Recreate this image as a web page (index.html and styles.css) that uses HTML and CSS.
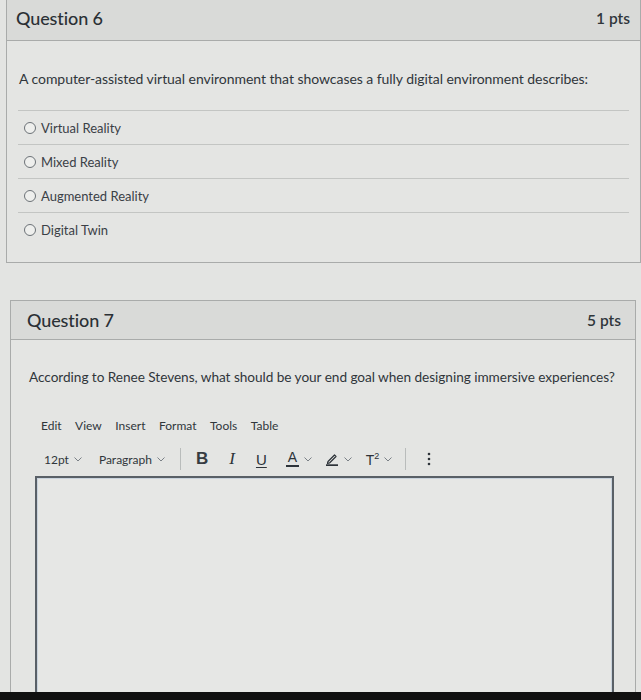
FILE: index.html
```html
<!DOCTYPE html>
<html lang="en">
<head>
<meta charset="utf-8">
<title>Quiz</title>
<link rel="stylesheet" href="styles.css">
</head>
<body>
<div class="page">
  <section class="card card-q6">
    <header class="card-head">
      <h2 class="q-title">Question 6</h2>
      <span class="q-pts">1 pts</span>
    </header>
    <div class="card-body q6-body">
      <p class="q-text">A computer-assisted virtual environment that showcases a fully digital environment describes:</p>
      <ul class="answers">
        <li class="answer"><span class="radio"></span><span class="ans-label">Virtual Reality</span></li>
        <li class="answer"><span class="radio"></span><span class="ans-label">Mixed Reality</span></li>
        <li class="answer"><span class="radio"></span><span class="ans-label">Augmented Reality</span></li>
        <li class="answer"><span class="radio"></span><span class="ans-label">Digital Twin</span></li>
      </ul>
    </div>
  </section>

  <section class="card card-q7">
    <header class="card-head head-q7">
      <h2 class="q-title">Question 7</h2>
      <span class="q-pts">5 pts</span>
    </header>
    <div class="card-body q7-body">
      <p class="q-text">According to Renee Stevens, what should be your end goal when designing immersive experiences?</p>
      <nav class="menubar">
        <span>Edit</span><span>View</span><span>Insert</span><span>Format</span><span>Tools</span><span>Table</span>
      </nav>
      <div class="toolbar">
        <span class="tb-select tb-size">12pt<svg class="chev" viewBox="0 0 8 5"><path d="M0.5 0.5 L4 4 L7.5 0.5"/></svg></span>
        <span class="tb-select tb-para">Paragraph<svg class="chev" viewBox="0 0 8 5"><path d="M0.5 0.5 L4 4 L7.5 0.5"/></svg></span>
        <span class="tb-sep"></span>
        <span class="tb-btn tb-bold">B</span>
        <span class="tb-btn tb-italic">I</span>
        <span class="tb-btn tb-under">U</span>
        <span class="tb-btn tb-color"><span class="a-wrap"><span class="a-letter">A</span><span class="a-bar"></span></span><svg class="chev" viewBox="0 0 8 5"><path d="M0.5 0.5 L4 4 L7.5 0.5"/></svg></span>
        <span class="tb-btn tb-hl"><svg class="pen" viewBox="0 0 14 14"><path d="M3 9.5 L9.5 3 L11 4.5 L4.5 11 L2.5 11.5 Z" fill="none" stroke="#2d3339" stroke-width="1.2" stroke-linejoin="round"/><rect x="1" y="12.3" width="12" height="1.7" fill="#2d3339"/></svg><svg class="chev" viewBox="0 0 8 5"><path d="M0.5 0.5 L4 4 L7.5 0.5"/></svg></span>
        <span class="tb-btn tb-sup"><span class="t-letter">T<sup>2</sup></span><svg class="chev" viewBox="0 0 8 5"><path d="M0.5 0.5 L4 4 L7.5 0.5"/></svg></span>
        <span class="tb-sep tb-sep2"></span>
        <span class="tb-more"><svg viewBox="0 0 4 14"><circle cx="2" cy="2" r="1.3"/><circle cx="2" cy="7" r="1.3"/><circle cx="2" cy="12" r="1.3"/></svg></span>
      </div>
      <div class="editor"></div>
    </div>
  </section>
</div>
<div class="photo-edge"></div>
</body>
</html>
```

FILE: styles.css
```css
* { box-sizing: border-box; }
html, body {
  margin: 0;
  padding: 0;
  height: 700px;
  overflow: hidden;
  background: #e3e4e2;
  font-family: Lato, "Open Sans", sans-serif;
  color: #2f363c;
}
.page {
  padding: 0;
}
.card {
  border: 1px solid #a9abaa;
  background: #e4e5e3;
}
.card-q6 {
  margin-left: 6px;
  width: 635px;
  border-top: none;
}
.card-q7 {
  margin-top: 37px;
  margin-left: 10px;
  width: 626px;
  border-bottom: none;
}
.card-head {
  display: flex;
  align-items: center;
  justify-content: space-between;
  height: 41px;
  padding: 0 10px 5px 9px;
  background: #d9dad8;
  border-bottom: 1px solid #a9abaa;
}
.head-q7 {
  height: 39px;
  padding: 0 14px 0 16px;
}
.q-title {
  margin: 0;
  font-size: 18px;
  font-weight: 500;
  color: #2b3035;
  letter-spacing: -0.1px;
}
.q-pts {
  font-size: 15.5px;
  font-weight: 600;
  color: #30363b;
}
.q-text {
  margin: 0;
  font-size: 14px;
  line-height: 20px;
  color: #30363b;
  white-space: nowrap;
}
.q6-body {
  padding: 28px 11px 16px 11px;
}
.q6-body .q-text {
  margin-left: 1px;
  margin-bottom: 21px;
  letter-spacing: -0.05px;
}
.answers {
  list-style: none;
  margin: 0;
  padding: 0;
}
.answer {
  display: flex;
  align-items: center;
  height: 34px;
  border-top: 1px solid #c3c5c3;
  padding-left: 6px;
  padding-top: 1px;
}
.radio {
  width: 12px;
  height: 12px;
  border: 1px solid #6c7277;
  border-radius: 50%;
  background: #eeefed;
  margin-right: 5px;
}
.ans-label {
  font-size: 13px;
  color: #3a4046;
}
.q7-body {
  padding: 27px 21px 0 18px;
}
.q7-body .q-text {
  font-size: 13.65px;
  letter-spacing: -0.05px;
}
.menubar {
  display: flex;
  gap: 13.5px;
  margin-top: 29px;
  margin-left: 12px;
  font-size: 12px;
  line-height: 20px;
  color: #30363b;
}
.toolbar {
  display: flex;
  align-items: center;
  height: 28px;
  margin-top: 9px;
  margin-left: 15px;
  font-size: 12px;
  color: #30363b;
}
.chev {
  width: 8px;
  height: 5px;
  fill: none;
  stroke: #7a8086;
  stroke-width: 1;
  margin-left: 5px;
}
.tb-select {
  display: flex;
  align-items: center;
}
.tb-size {
  margin-right: 17px;
}
.tb-para {
  margin-right: 15px;
}
.tb-sep {
  width: 1px;
  height: 22px;
  background: #b9bcbb;
}
.tb-btn {
  display: flex;
  align-items: center;
  color: #2d3339;
}
.tb-bold {
  margin-left: 15px;
  font-family: "Liberation Sans", Arial, sans-serif;
  font-weight: 700;
  font-size: 17px;
  color: #363c42;
}
.tb-italic {
  margin-left: 21px;
  font-family: "Liberation Serif", serif;
  font-style: italic;
  font-size: 17px;
}
.tb-under {
  margin-left: 21px;
  font-family: "Liberation Sans", Arial, sans-serif;
  font-size: 15px;
  text-decoration: underline;
  text-underline-offset: 2px;
  text-decoration-thickness: 1px;
}
.tb-color {
  margin-left: 19px;
}
.a-wrap {
  display: flex;
  flex-direction: column;
  align-items: center;
}
.a-letter {
  font-family: "Liberation Sans", Arial, sans-serif;
  font-size: 14px;
  line-height: 13px;
}
.a-bar {
  width: 13px;
  height: 2.5px;
  background: #2d3339;
  margin-top: 1px;
}
.tb-hl {
  margin-left: 13px;
}
.pen {
  width: 14px;
  height: 14px;
}
.tb-sup {
  margin-left: 14px;
}
.t-letter {
  font-family: "Liberation Sans", Arial, sans-serif;
  font-size: 14px;
}
.t-letter sup {
  font-size: 9px;
}
.tb-sep2 {
  margin-left: 13px;
}
.tb-more {
  margin-left: 21px;
  display: flex;
}
.tb-more svg {
  width: 4px;
  height: 14px;
  fill: #2d3339;
}
.editor {
  margin-top: 3px;
  margin-left: 6px;
  height: 240px;
  border: 2px solid #596067;
  border-bottom: none;
  box-shadow: inset 0 0 0 1px #c9d3dd;
  background: #e6e7e5;
}
.photo-edge {
  position: fixed;
  left: 0;
  right: 0;
  bottom: 0;
  height: 8px;
  background: #111;
}
```
